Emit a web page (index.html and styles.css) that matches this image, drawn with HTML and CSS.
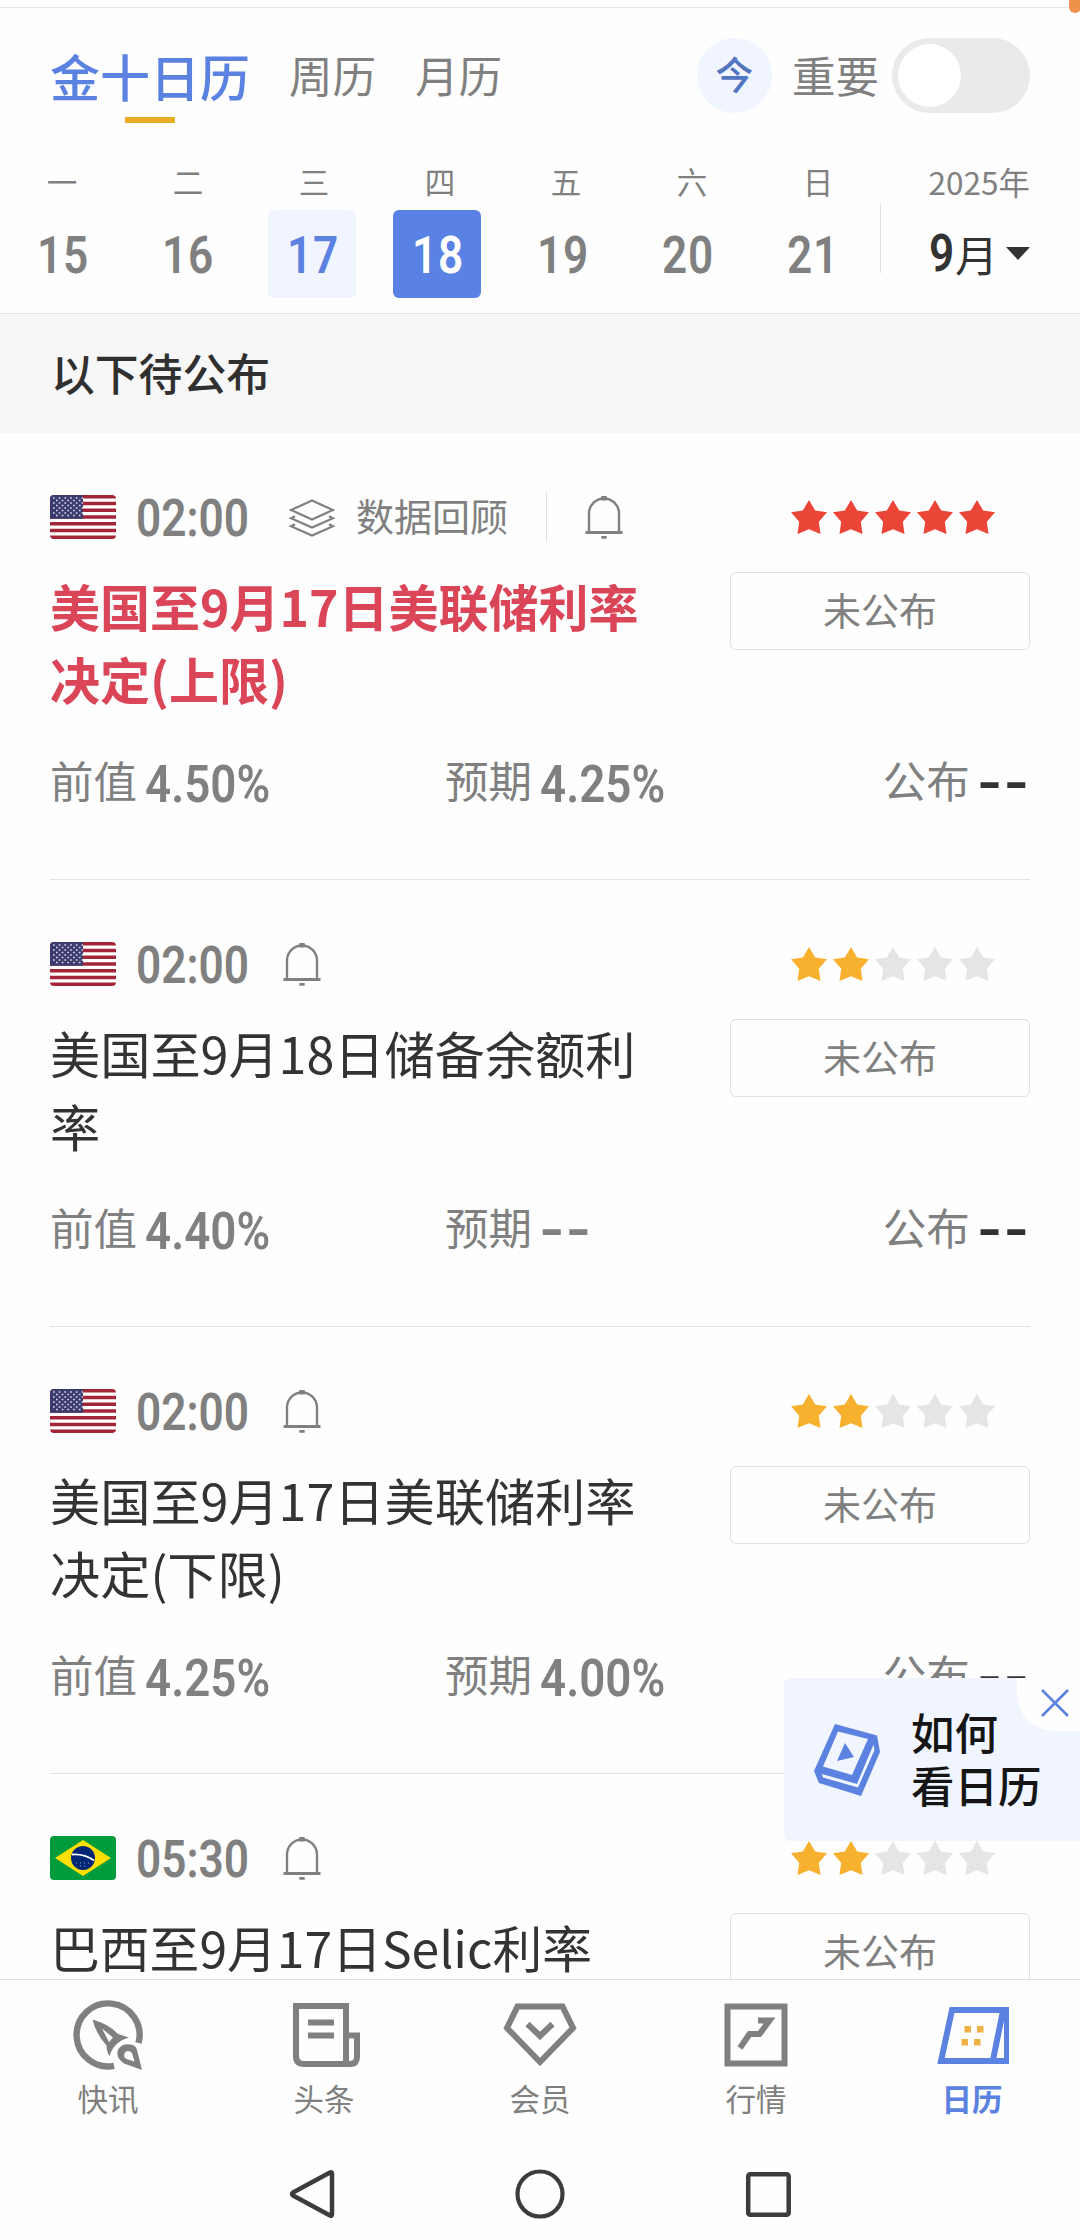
FILE: index.html
```html
<!DOCTYPE html>
<html lang="zh-CN">
<head>
<meta charset="utf-8">
<title>金十日历</title>
<link rel="stylesheet" href="styles.css">
</head>
<body>
<svg class="defs" aria-hidden="true">
  <symbol id="bell" viewBox="0 0 38 44"><path d="M4 38V18.500a15 15 0 0 1 30 0V38" fill="none" stroke="currentColor" stroke-width="2.400"/><path d="M0.500 37.500h37" stroke="currentColor" stroke-width="2.800"/><path d="M16.300 1h5.400v4.500h-5.400zM16.300 41h5.400v2.800h-5.400z" fill="currentColor"/></symbol>
  <symbol id="star" viewBox="0 0 36 34"><path d="M18 0l6.200 10.500L36 12.200l-8.200 9.600L29.500 34 18 29.200 6.500 34l1.700-12.200L0 12.200l11.800-1.700z" fill="currentColor"/></symbol>
  <symbol id="us" viewBox="0 0 66 44"><path fill="#fff" d="M0 0h66v44H0z"/><path d="M0 1.700h66M0 8.500h66M0 15.200h66M0 22h66M0 28.800h66M0 35.500h66M0 42.300h66" stroke="#a32638" stroke-width="3.400"/><path fill="#3c3b6e" d="M0 0h33v23.700H0z"/><path d="M3 3h30M6 5.500h27M3 8h30M6 10.500h27M3 13h30M6 15.500h27M3 18h30M6 20.500h27" stroke="#d8d8ea" stroke-width="1.700" stroke-dasharray="1.700 4"/></symbol>
  <symbol id="br" viewBox="0 0 66 44"><path fill="#009c3b" d="M0 0h66v44H0z"/><path fill="#ffdf00" d="M33 4l28 18-28 18L5 22z"/><circle cx="33" cy="22" r="12" fill="#002776"/><path d="M22 18.500q12-1 22 6" fill="none" stroke="#fff" stroke-width="1.800"/><path d="M26 27h14M30 30h8" stroke="#8ea3cf" stroke-width="1" stroke-dasharray="1 3"/></symbol>
</svg>
<div class="app">
  <header class="header">
    <span class="scroll-mark"></span>
    <div class="tabs">
      <div class="tab tab-active">金十日历</div>
      <div class="tab">周历</div>
      <div class="tab">月历</div>
      <div class="today">今</div>
      <div class="tab important">重要</div>
      <div class="toggle"><span class="knob"></span></div>
    </div>
    <div class="calendar">
      <div class="week">
        <div class="weekdays"><span>一</span><span>二</span><span>三</span><span>四</span><span>五</span><span>六</span><span>日</span></div>
        <div class="dates">
          <div class="date"><span class="din">15</span></div>
          <div class="date"><span class="din">16</span></div>
          <div class="date date-today"><span class="din">17</span></div>
          <div class="date date-selected"><span class="din">18</span></div>
          <div class="date"><span class="din">19</span></div>
          <div class="date"><span class="din">20</span></div>
          <div class="date"><span class="din">21</span></div>
        </div>
      </div>
      <div class="rule"></div>
      <div class="month">
        <div class="year">2025年</div>
        <div class="month-pick"><span class="din din-one">9</span><span>月</span><svg class="caret" viewBox="0 0 24 13"><path d="M0 0h24L12 13z" fill="currentColor"/></svg></div>
      </div>
    </div>
  </header>
  <h2 class="section">以下待公布</h2>
  <main class="list">
    <article class="item">
      <div class="top">
        <div class="info">
          <div class="head">
            <svg class="flag"><use href="#us"/></svg><span class="time"><span class="din">02:00</span></span>
            <svg class="layers" viewBox="0 0 46 38"><g fill="none" stroke="currentColor" stroke-width="2.300"><path d="M23 1.500l21 9.500-21 9.500L2 11z"/><path d="M6 17.200l-4 2L23 28.500l21-9.300-4-2"/><path d="M6 25.200l-4 2L23 36.500l21-9.300-4-2"/></g></svg>
            <span class="review">数据回顾</span><span class="sep"></span>
            <svg class="bell"><use href="#bell"/></svg>
          </div>
          <h3 class="title title-hot">美国至9月17日美联储利率决定(上限)</h3>
        </div>
        <div class="side">
          <div class="stars stars-hot"><svg><use href="#star"/></svg><svg><use href="#star"/></svg><svg><use href="#star"/></svg><svg><use href="#star"/></svg><svg><use href="#star"/></svg></div>
          <div class="status">未公布</div>
        </div>
      </div>
      <div class="values">
        <div class="value">前值<span class="num"><span class="din">4.50%</span></span></div>
        <div class="value">预期<span class="num"><span class="din">4.25%</span></span></div>
        <div class="value">公布<span class="dash dark">--</span></div>
      </div>
    </article>
    <article class="item">
      <div class="top">
        <div class="info">
          <div class="head">
            <svg class="flag"><use href="#us"/></svg><span class="time"><span class="din">02:00</span></span>
            <svg class="bell"><use href="#bell"/></svg>
          </div>
          <h3 class="title">美国至9月18日储备余额利率</h3>
        </div>
        <div class="side">
          <div class="stars"><svg><use href="#star"/></svg><svg><use href="#star"/></svg><svg class="off"><use href="#star"/></svg><svg class="off"><use href="#star"/></svg><svg class="off"><use href="#star"/></svg></div>
          <div class="status">未公布</div>
        </div>
      </div>
      <div class="values">
        <div class="value">前值<span class="num"><span class="din">4.40%</span></span></div>
        <div class="value">预期<span class="dash">--</span></div>
        <div class="value">公布<span class="dash dark">--</span></div>
      </div>
    </article>
    <article class="item">
      <div class="top">
        <div class="info">
          <div class="head">
            <svg class="flag"><use href="#us"/></svg><span class="time"><span class="din">02:00</span></span>
            <svg class="bell"><use href="#bell"/></svg>
          </div>
          <h3 class="title">美国至9月17日美联储利率决定(下限)</h3>
        </div>
        <div class="side">
          <div class="stars"><svg><use href="#star"/></svg><svg><use href="#star"/></svg><svg class="off"><use href="#star"/></svg><svg class="off"><use href="#star"/></svg><svg class="off"><use href="#star"/></svg></div>
          <div class="status">未公布</div>
        </div>
      </div>
      <div class="values">
        <div class="value">前值<span class="num"><span class="din">4.25%</span></span></div>
        <div class="value">预期<span class="num"><span class="din">4.00%</span></span></div>
        <div class="value">公布<span class="dash dark">--</span></div>
      </div>
    </article>
    <article class="item">
      <div class="top">
        <div class="info">
          <div class="head">
            <svg class="flag"><use href="#br"/></svg><span class="time"><span class="din">05:30</span></span>
            <svg class="bell"><use href="#bell"/></svg>
          </div>
          <h3 class="title title-mixed">巴西至9月17日Selic利率</h3>
        </div>
        <div class="side">
          <div class="stars"><svg><use href="#star"/></svg><svg><use href="#star"/></svg><svg class="off"><use href="#star"/></svg><svg class="off"><use href="#star"/></svg><svg class="off"><use href="#star"/></svg></div>
          <div class="status">未公布</div>
        </div>
      </div>
    </article>
  </main>
  <aside class="guide">
    <svg class="guide-icon" viewBox="0 0 66 72"><path fill="currentColor" fill-rule="evenodd" d="M21 0L63 11.500 66 28 47 72 5 59 0 47zM24 7.500L9 42.500 38 51 54 15zM8 50l1 3.500L44 63.500 60.500 26l-1-5.500L43 60z"/><path d="M31 19l9 14-17 4z" fill="currentColor"/></svg>
    <div class="guide-text">如何<br>看日历</div>
    <div class="guide-close"><svg viewBox="0 0 28 28"><path d="M1 1l26 26M27 1L1 27" stroke="currentColor" stroke-width="2.600"/></svg></div>
  </aside>
  <nav class="nav">
    <div class="nav-item"><svg class="nav-icon" viewBox="0 0 74 70"><path d="M67.500 43A31.500 31.500 0 1 0 43 65.800" fill="none" stroke="currentColor" stroke-width="6.400"/><path fill="currentColor" fill-rule="evenodd" d="M21.500 19.500Q38 24 47 34l11 3.500q-15 4-19.500 18.500-3-4-3-10.500Q25 34 21.500 19.500zM31 28.500l7 13.500 4-4.500z"/><path fill="currentColor" fill-rule="evenodd" d="M71 70l-18-6.500q-9-6-6-14 5-7.500 15-4.500 3.500 1.500 4.500 7zM63.500 61.500L61 53q-3.500-3.500-7-.5-2.500 4 1.500 6.500z"/></svg>快讯</div>
    <div class="nav-item"><svg class="nav-icon news" viewBox="0 0 74 70"><path d="M6 6h50v58H14q-8 0-8-8z M56 35.500h11V57q0 7-7 7h-4M18 22.500h26M18 35.500h26" fill="none" stroke="currentColor" stroke-width="6"/></svg>头条</div>
    <div class="nav-item"><svg class="nav-icon" viewBox="0 0 74 70"><path d="M14.500 6.500h45l10.500 21.500L37 62 4 28z M24.500 24l12.500 12 12.500-12" fill="none" stroke="currentColor" stroke-width="6"/></svg>会员</div>
    <div class="nav-item"><svg class="nav-icon" viewBox="0 0 74 70"><path d="M8.500 6.500h57v57h-57zM21 48l9.500-14h10l10-13.500H39" fill="none" stroke="currentColor" stroke-width="6"/></svg>行情</div>
    <div class="nav-item nav-active"><svg class="nav-icon" viewBox="0 0 74 70"><path d="M17 10h55v51H6zM68 11L58 60" fill="none" stroke="currentColor" stroke-width="6"/><path fill="#edb147" d="M29.500 26h6.500v6.500h-6.500zM42 26h6.500v6.500H42zM26.500 39H33v6.500h-6.500zM39 39h6.500v6.500H39z"/></svg>日历</div>
  </nav>
  <footer class="system">
    <svg viewBox="0 0 50 50"><path d="M43 3.500Q45 2.500 45 5v40q0 2.500-2 1.500L6 26.500q-2-1.500 0-3z" fill="none" stroke="#3c3c3c" stroke-width="4.500" stroke-linejoin="round"/></svg>
    <svg viewBox="0 0 50 50"><circle cx="25" cy="25" r="22.500" fill="none" stroke="#3c3c3c" stroke-width="4.200"/></svg>
    <svg viewBox="0 0 50 50"><rect x="5.200" y="5.200" width="40.500" height="40.500" rx="2" fill="none" stroke="#3c3c3c" stroke-width="4.500"/></svg>
  </footer>
</div>
</body>
</html>
```
FILE: styles.css
```css
* { box-sizing: border-box; margin: 0; padding: 0; }
body { background: #fefefe; color: #808080; font-family: "Noto Sans CJK SC", sans-serif; }
.defs { position: absolute; width: 0; height: 0; }
.app { position: relative; width: 1080px; height: 2240px; overflow: hidden; display: flex; flex-direction: column; }

/* Condensed numerals */
.din { display: inline-block; font-family: Roboto, sans-serif; font-weight: 600; font-size: 52px; line-height: 1; transform: scaleX(.85); transform-origin: left center; white-space: nowrap; }

.header { position: relative; height: 314px; border-bottom: 1px solid #e2e2e2; padding-top: 7px; }
.scroll-mark { position: absolute; top: 0; right: -1px; width: 12px; height: 13px; background: #ee914a; border-radius: 0 0 6px 6px; }
.tabs { border-top: 1px solid #e4e4e4; display: flex; align-items: center; height: 137px; padding: 0 50px 0 50px; }
.tab { font-size: 43.5px; line-height: 60px; margin-top: -3px; margin-left: 39px; }
.tab-active { position: relative; margin-left: 0; font-size: 50px; font-weight: 500; color: #5b82e0; }
.tab-active::after { content: ""; position: absolute; left: 75px; bottom: -18px; width: 50px; height: 6px; background: #e9ac22; }
.today { width: 75px; height: 75px; margin-left: auto; margin-top: -1px; border-radius: 50%; background: #f0f5ff; color: #5276c0; font-size: 38px; font-weight: 500; line-height: 70px; text-align: center; }
.important { margin-left: 20px; }
.toggle { width: 138px; height: 75px; margin-left: 13px; margin-top: -1px; border-radius: 38px; background: #eaeaea; padding: 6px; }
.knob { display: block; width: 63px; height: 63px; border-radius: 50%; background: #fff; }

.calendar { display: flex; margin-top: 15px; }
.week { width: 880px; }
.weekdays { display: grid; grid-template-columns: repeat(7, 126px); margin-left: -1px; font-size: 30.500px; line-height: 44px; text-align: center; }
.dates { display: grid; grid-template-columns: repeat(7, 125px); margin-top: 7px; margin-left: -1px; }
.date { width: 88px; height: 88px; justify-self: center; border-radius: 6px; padding: 20px 0 0 19px; }
.date .din { letter-spacing: 1px; }
.date-today { background: #f0f5ff; color: #5b82e0; }
.date-selected { background: #5a81e4; color: #fff; }
.rule { width: 1px; height: 70px; margin-top: 44px; background: #e2e2e2; }
.month { flex: 1; padding-right: 50px; color: #333; }
.year { text-align: right; color: #808080; font-size: 31.500px; line-height: 44px; }
.month-pick { display: flex; align-items: center; height: 60px; margin-top: 20px; padding-left: 48px; font-size: 43px; line-height: 60px; }
.din-one { width: 26px; margin-top: 2px; }
.caret { width: 24px; height: 13px; margin-left: auto; }

.section { height: 119px; background: #f7f7f7; color: #303030; font-size: 43.800px; font-weight: 500; line-height: 116px; padding-left: 51px; }

.list { height: 1546px; overflow: hidden; padding: 0 50px; }
.item { height: 447px; border-bottom: 1px solid #e2e2e2; padding-top: 59px; }
.top { display: flex; justify-content: space-between; }
.info { width: 595px; }
.head { display: flex; align-items: center; height: 50px; }
.flag { width: 66px; height: 44px; border-radius: 4px; }
.time { width: 112px; height: 52px; margin-left: 20px; margin-top: 4px; }
.layers { width: 46px; height: 38px; margin-left: 41px; margin-top: 2px; }
.review { margin-left: 21px; font-size: 38px; line-height: 50px; margin-top: -4px; }
.sep { width: 1px; height: 50px; margin-left: 38px; background: #e2e2e2; }
.bell { width: 38px; height: 44px; margin-left: 35px; }
.sep + .bell { margin-left: 38px; }
.title { margin-top: 27px; height: 146px; color: #333; font-size: 50.200px; font-weight: 400; line-height: 73px; }
.title-hot { color: #db4558; font-weight: 700; font-size: 50px; }
.title-mixed { font-size: 49.800px; }
.side { width: 300px; }
.stars { display: flex; align-items: center; gap: 6px; height: 50px; padding-left: 61px; color: #f8b12f; }
.stars svg { width: 36px; height: 34px; }
.stars-hot { color: #eb4537; }
.stars .off { color: #e5e5e5; }
.status { margin-top: 30px; height: 78px; border: 1px solid #e0e0e0; border-radius: 6px; font-size: 38px; line-height: 72px; text-align: center; }
.values { display: grid; grid-template-columns: 395px 1fr auto; margin-top: 35px; font-size: 43.500px; line-height: 60px; }
.value { display: flex; align-items: center; height: 60px; }
.num { margin-left: 8px; height: 52px; margin-top: 9px; line-height: 1; }
.num .din { transform: scaleX(.88); }
.dash { font-family: Inter, sans-serif; font-weight: 600; font-size: 55px; line-height: 60px; letter-spacing: 1px; margin-left: 7px; margin-top: 3px; }
.dark { color: #333; }

.guide { position: absolute; left: 784px; top: 1678px; width: 296px; height: 163px; display: flex; align-items: center; border-radius: 6px 0 0 6px; background: #f0f5ff; padding-left: 30px; color: #5b82e0; }
.guide-icon { width: 66px; height: 72px; }
.guide-text { margin-left: 31px; color: #151515; font-size: 43.500px; font-weight: 500; line-height: 53px; margin-top: -4px; }
.guide-close { position: absolute; top: 0; right: 0; width: 63px; height: 53px; background: #fefefe; border-bottom-left-radius: 37px; padding: 11px 0 0 24px; }
.guide-close svg { display: block; width: 28px; height: 28px; }

.nav { display: grid; grid-template-columns: repeat(5, 1fr); height: 155px; border-top: 1px solid #e0e0e0; padding-top: 20px; }
.nav-item { display: flex; flex-direction: column; align-items: center; font-size: 30.500px; line-height: 44px; }
.nav-icon { width: 74px; height: 70px; margin-bottom: 6px; }
.news { margin-left: 6px; }
.nav-active { color: #5b82e0; font-weight: 700; }
.system { display: flex; gap: 178px; padding: 35px 0 0 287px; }
.system svg { width: 50px; height: 50px; }
```
